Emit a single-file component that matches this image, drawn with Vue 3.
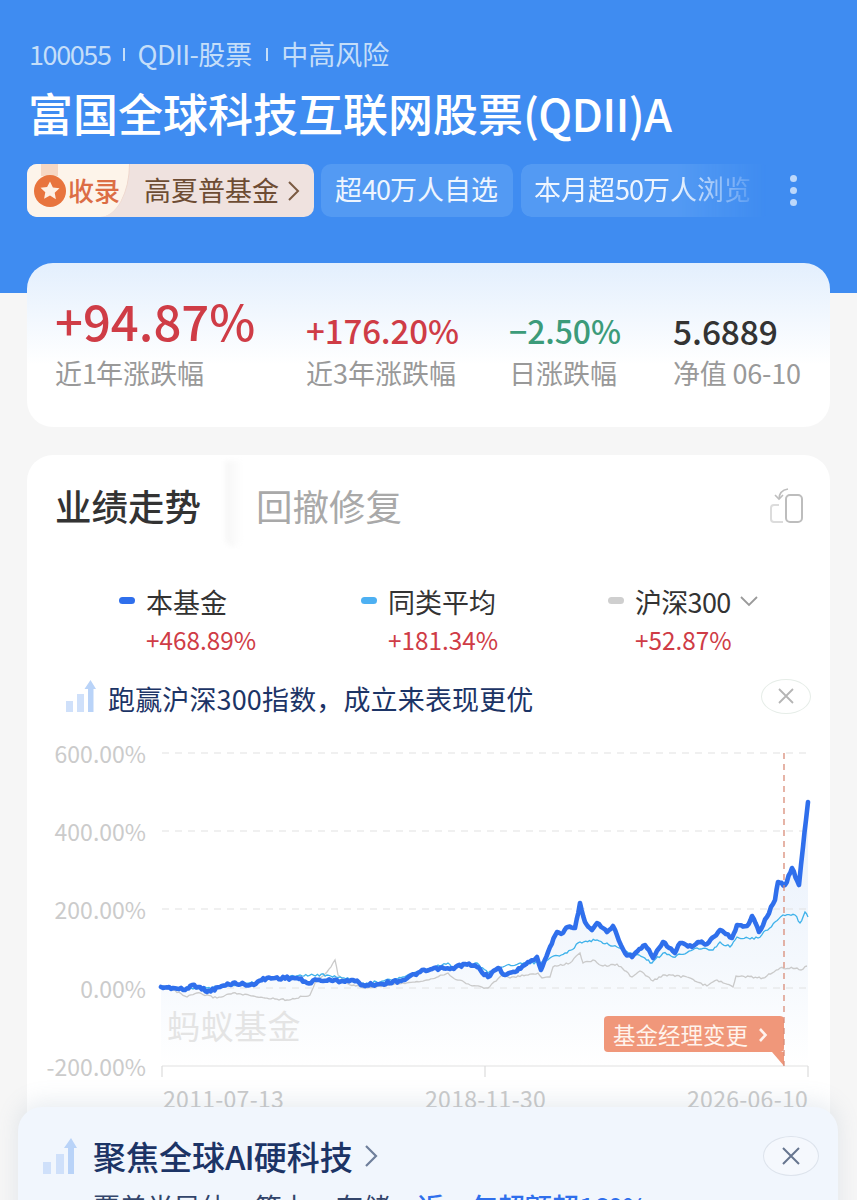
<script setup>
const main = [[161,987],[173,988],[185,990],[192,985],[200,987],[207,992],[220,987],[233,983],[250,985],[267,978],[297,978],[307,983],[317,980],[343,981],[353,980],[363,985],[380,984],[403,980],[420,972],[440,968],[450,969],[465,964],[477,967],[488,977],[498,968],[505,975],[515,972],[528,962],[537,957],[541,970],[550,947],[557,932],[563,933],[568,927],[575,928],[580,903],[585,922],[592,930],[597,923],[607,932],[613,926],[625,953],[632,957],[645,945],[653,958],[663,942],[675,953],[680,943],[692,947],[698,942],[707,944],[720,930],[732,938],[737,925],[747,926],[752,916],[759,932],[775,900],[778,882],[785,885],[792,868],[799,885],[803,847],[806,820],[808,802]]
const peer = [[161,987],[207,988],[250,983],[267,979],[300,975],[327,975],[340,977],[363,983],[380,982],[403,977],[420,972],[448,963],[452,968],[477,963],[488,973],[507,965],[528,963],[540,963],[550,958],[567,953],[580,942],[597,940],[617,947],[630,953],[643,957],[652,963],[663,953],[673,957],[697,948],[713,950],[720,942],[730,947],[737,937],[748,938],[758,938],[783,915],[795,915],[800,923],[805,912],[808,917]]
const gray = [[161,987],[173,990],[187,997],[197,993],[217,998],[233,993],[257,997],[287,1000],[310,995],[315,983],[327,972],[335,960],[338,975],[350,985],[367,988],[403,983],[427,980],[448,973],[452,977],[470,985],[488,988],[502,975],[510,978],[538,973],[542,978],[550,977],[553,967],[570,963],[580,953],[583,963],[593,960],[603,966],[617,964],[632,977],[640,971],[653,981],[663,975],[687,977],[707,986],[717,980],[733,987],[736,976],[763,978],[780,968],[797,968],[801,970],[807,966]]

function noise(i, seed) {
  const s = Math.sin(i * 12.9898 + seed * 78.233) * 43758.5453
  return s - Math.floor(s) - 0.5
}
function build(points, amp, seed) {
  const out = []
  let k = 0
  for (let i = 0; i < points.length - 1; i++) {
    const [x0, y0] = points[i]
    const [x1, y1] = points[i + 1]
    const steps = Math.max(1, Math.round((x1 - x0) / 2))
    for (let j = 0; j < steps; j++) {
      const t = j / steps
      const n = j === 0 ? 0 : noise(k, seed) * amp
      out.push([x0 + (x1 - x0) * t, y0 + (y1 - y0) * t + n])
      k++
    }
  }
  out.push(points[points.length - 1])
  return out.map(p => p[0].toFixed(1) + ',' + p[1].toFixed(1)).join(' ')
}
const mainLine = build(main, 3, 1)
const peerLine = build(peer, 2.6, 2)
const grayLine = build(gray, 1.8, 3)
const areaFill = '161,1066 ' + mainLine + ' 808,1066'

const stats = [
  { value: '+176.20%', label: '近3年涨跌幅', cls: 'up' },
  { value: '−2.50%', label: '日涨跌幅', cls: 'down' },
  { value: '5.6889', label: '净值 06-10', cls: 'flat' }
]
const legends = [
  { name: '本基金', value: '+468.89%', color: '#2f6fec', w: 242 },
  { name: '同类平均', value: '+181.34%', color: '#4db0f2', w: 247 },
  { name: '沪深300', value: '+52.87%', color: '#cfcfcf', w: 160, more: true }
]
const yLabels = [['600.00%', 763], ['400.00%', 841], ['200.00%', 919], ['0.00%', 998], ['-200.00%', 1076]]
const gridY = [753, 831, 909, 988]
const xLabels = [['2011-07-13', 163], ['2018-11-30', 425], ['2026-06-10', 687]]
</script>

<template>
  <div class="page">
    <header class="hero">
      <div class="meta">
        <span class="num">100055</span><i class="sep"></i>
        <span class="meta-type"><span class="qd">QDII-</span>股票</span><i class="sep"></i>
        <span>中高风险</span>
      </div>
      <h1 class="title">富国全球科技互联网股票<span class="latin">(QDII)A</span></h1>
      <div class="tags">
        <div class="award">
          <div class="award-left">
            <i class="ribbon"></i>
            <svg class="medal" width="32" height="32" viewBox="0 0 32 32">
              <circle cx="16" cy="16" r="16" fill="#e8743d" />
              <path d="M16 6.5l2.9 6 6.6.8-4.8 4.5 1.2 6.5L16 20.6l-5.9 3.2 1.2-6.5-4.8-4.5 6.6-.8z" fill="#fdf0e4" />
            </svg>
            <span class="award-name">收录</span>
          </div>
          <span class="award-text">高夏普基金</span>
          <svg class="award-arrow" width="13" height="22" viewBox="0 0 13 22"><path d="M2 2l9 9-9 9" fill="none" stroke="#7a5a42" stroke-width="2" /></svg>
        </div>
        <div class="tag tag-two">超<span class="num">40</span>万人自选</div>
        <div class="tag tag-fade">本月超<span class="num">50</span>万人浏览</div>
        <div class="dots"><i></i><i></i><i></i></div>
      </div>
    </header>

    <section class="card summary">
      <div class="stat-main">
        <div class="big">+94.87%</div>
        <div class="label">近<span class="num">1</span>年涨跌幅</div>
      </div>
      <div class="stat-rest">
        <div v-for="s in stats" :key="s.label" class="stat">
          <div class="mid" :class="s.cls">{{ s.value }}</div>
          <div class="label">{{ s.label }}</div>
        </div>
      </div>
    </section>

    <section class="card perf">
      <div class="tabs">
        <div class="tab-on">业绩走势</div>
        <div class="tab-shade"></div>
        <div class="tab-off">回撤修复</div>
        <svg class="share" width="36" height="38" viewBox="0 0 36 38" fill="none">
          <rect x="17" y="9" width="16" height="27" rx="4" stroke="#bdbdbd" stroke-width="2" />
          <path d="M10 19H5a3 3 0 0 0-3 3v11a3 3 0 0 0 3 3h9" stroke="#dcdcdc" stroke-width="2" />
          <path d="M10 13c0-5 3-9 9-10" stroke="#bdbdbd" stroke-width="1.6" />
          <path d="M6 9l4 4 4-4" stroke="#bdbdbd" stroke-width="1.6" />
        </svg>
      </div>

      <div class="legends">
        <div v-for="l in legends" :key="l.name" class="legend" :style="{ width: l.w + 'px' }">
          <div class="legend-top">
            <i class="swatch" :style="{ background: l.color }"></i>
            <span class="legend-name" :class="{ tight: l.more }">{{ l.name }}</span>
            <svg v-if="l.more" class="legend-more" width="20" height="12" viewBox="0 0 20 12"><path d="M2 2l8 8 8-8" fill="none" stroke="#9a9a9a" stroke-width="1.8" /></svg>
          </div>
          <div class="legend-val">{{ l.value }}</div>
        </div>
      </div>

      <div class="hint">
        <svg class="bars" width="30" height="32" viewBox="0 0 30 32">
          <rect x="0" y="21" width="7" height="11" fill="#cfe0fa" />
          <rect x="11" y="14" width="7" height="18" fill="#cfe0fa" />
          <path d="M22 32V9h-3.500L24.500 0 30 9h-2.500v23z" fill="#b9d3f8" />
        </svg>
        <span class="hint-text">跑赢沪深300指数，成立来表现更优</span>
        <div class="pill">
          <svg width="18" height="18" viewBox="0 0 18 18"><path d="M2 2l14 14M16 2L2 16" stroke="#b5b5b5" stroke-width="1.8" /></svg>
        </div>
      </div>

      <svg class="chart" width="803" height="380" viewBox="27 740 803 380">
        <defs>
          <linearGradient id="area" x1="0" y1="0" x2="0" y2="1">
            <stop offset="0" stop-color="#e9f1fc" />
            <stop offset="0.6" stop-color="#f4f8fd" />
            <stop offset="1" stop-color="#ffffff" />
          </linearGradient>
        </defs>
        <polygon :points="areaFill" fill="url(#area)" />
        <line v-for="y in gridY" :key="y" x1="162" x2="808" :y1="y" :y2="y" stroke="#e2e2e2" stroke-width="1.2" stroke-dasharray="7 6" />
        <line x1="162" x2="808" y1="1066" y2="1066" stroke="#e2e2e2" stroke-width="1.2" />
        <line x1="162" x2="162" y1="1066" y2="1077" stroke="#dcdcdc" stroke-width="1.2" />
        <line x1="485" x2="485" y1="1066" y2="1077" stroke="#dcdcdc" stroke-width="1.2" />
        <line x1="808" x2="808" y1="1066" y2="1077" stroke="#dcdcdc" stroke-width="1.2" />
        <text v-for="t in yLabels" :key="t[0]" class="axis" x="146" :y="t[1]" text-anchor="end">{{ t[0] }}</text>
        <text v-for="t in xLabels" :key="t[0]" class="axis axis-x" :x="t[1]" y="1108">{{ t[0] }}</text>
        <text class="mark" x="167" y="1039">蚂蚁基金</text>
        <polyline :points="grayLine" fill="none" stroke="#cacaca" stroke-width="1.3" />
        <polyline :points="peerLine" fill="none" stroke="#3fb2ea" stroke-width="1.3" />
        <polyline :points="mainLine" fill="none" stroke="#2f6fec" stroke-width="4.6" stroke-linejoin="round" stroke-linecap="round" />
        <rect x="604" y="1016" width="180" height="36" rx="4" fill="#f0977a" />
        <path d="M772 1052h12v14z" fill="#f0977a" />
        <line x1="784" x2="784" y1="753" y2="1066" stroke="#d98c78" stroke-width="1.3" stroke-dasharray="6 5" />
        <text class="tag-text" x="613" y="1044">基金经理变更</text>
        <path d="M760 1029l5.500 6-5.500 6" fill="none" stroke="#fff3ee" stroke-width="2.600" />
      </svg>
    </section>

    <aside class="float">
      <div class="float-head">
        <svg class="bars" width="34" height="36" viewBox="0 0 34 36">
          <rect x="0" y="24" width="8" height="12" fill="#cfe0fa" />
          <rect x="13" y="16" width="8" height="20" fill="#cfe0fa" />
          <path d="M25 36V10h-4l7-10 6 10h-3v26z" fill="#b9d3f8" />
        </svg>
        <span class="float-title">聚焦全球<span class="ai">AI</span>硬科技</span>
        <svg class="float-arrow" width="15" height="24" viewBox="0 0 15 24"><path d="M2 2l10 10L2 22" fill="none" stroke="#6f7f9b" stroke-width="2.200" /></svg>
        <div class="pill pill-lg">
          <svg width="20" height="20" viewBox="0 0 20 20"><path d="M2 2l16 16M18 2L2 18" stroke="#66758f" stroke-width="2" /></svg>
        </div>
      </div>
      <div class="float-body">覆盖半导体、算力、存储，<span class="blue">近一年超额超<span class="num">160%</span></span></div>
    </aside>
  </div>
</template>

<style>
html, body { margin: 0; background: #f6f6f6; }
</style>

<style scoped>
.page {
  position: relative;
  width: 857px;
  height: 1200px;
  overflow: hidden;
  background: #f6f6f6;
  font-family: "Noto Sans CJK SC", "Noto Sans", sans-serif;
}
.num { letter-spacing: -1px; }

.hero {
  height: 293px;
  box-sizing: border-box;
  padding: 35px 0 0 27px;
  background: #3f8cf1;
  color: #fff;
}
.meta {
  display: flex;
  align-items: center;
  height: 38px;
  padding-left: 2px;
  font-size: 27px;
  line-height: 38px;
  color: #c4def9;
}
.meta .num { letter-spacing: -1.400px; }
.qd { letter-spacing: -.6px; }
.meta-type { margin-right: 2px; }
.sep {
  width: 2px;
  height: 13px;
  margin: 0 13px 0 12px;
  background: #c4def9;
}
.title {
  margin: 11px 0 0 1px;
  height: 58px;
  font-size: 45px;
  line-height: 58px;
  font-weight: 500;
  white-space: nowrap;
}
.latin { letter-spacing: -.7px; }
.tags {
  display: flex;
  align-items: center;
  gap: 8px;
  margin-top: 22px;
  height: 53px;
}
.award {
  display: flex;
  align-items: center;
  width: 287px;
  height: 53px;
  margin-right: -1px;
  overflow: hidden;
  border-radius: 10px;
  background: #efe2df;
}
.award-left {
  position: relative;
  display: flex;
  align-items: center;
  width: 103px;
  height: 100%;
  padding-left: 7px;
  box-sizing: border-box;
  background: #fdf4ea;
  border-bottom-right-radius: 30px 53px;
  border-right: 1px solid #eed6cc;
}
.ribbon {
  position: absolute;
  left: 14px;
  top: 0;
  width: 17px;
  height: 12px;
  background: #f6d8c4;
}
.medal { position: relative; flex: none; }
.award-name {
  margin-left: 2px;
  padding-bottom: 3px;
  font-size: 26px;
  font-weight: 500;
  color: #dc6d45;
  white-space: nowrap;
}
.award-text {
  margin-left: 14px;
  padding-bottom: 3px;
  font-size: 27px;
  color: #6d4c33;
  white-space: nowrap;
}
.award-arrow { margin-left: 8px; }
.tag {
  flex: none;
  box-sizing: border-box;
  height: 53px;
  padding: 0 13px;
  border-radius: 10px;
  background: #539af3;
  font-size: 27px;
  line-height: 50px;
  color: #eef5fe;
  white-space: nowrap;
}
.tag-two { width: 192px; padding-left: 14px; }
.tag-fade {
  width: 250px;
  overflow: hidden;
  -webkit-mask-image: linear-gradient(90deg, #000 62%, transparent 98%);
  mask-image: linear-gradient(90deg, #000 62%, transparent 98%);
}
.dots {
  display: flex;
  flex-direction: column;
  gap: 5px;
  margin-left: 11px;
}
.dots i {
  width: 7px;
  height: 7px;
  border-radius: 50%;
  background: #bcd8fb;
}

.card {
  margin: 0 27px;
  border-radius: 26px;
  background: #fff;
}
.summary {
  display: flex;
  align-items: flex-start;
  height: 164px;
  margin-top: -30px;
  box-sizing: border-box;
  padding: 23px 0 0 28px;
  position: relative;
  background: linear-gradient(180deg, #e3effd 0%, #ffffff 62%);
}
.big {
  height: 68px;
  font-size: 49px;
  line-height: 68px;
  font-weight: 500;
  color: #cf3c46;
  white-space: nowrap;
}
.label {
  height: 38px;
  font-size: 27px;
  line-height: 38px;
  color: #999;
  white-space: nowrap;
}
.stat-main { width: 251px; }
.stat-rest {
  display: flex;
  padding-top: 21px;
}
.stat:nth-child(1) { width: 203px; }
.stat:nth-child(2) { width: 164px; }
.stat:nth-child(3) .label { letter-spacing: -.2px; }
.mid {
  height: 47px;
  font-size: 33px;
  line-height: 47px;
  letter-spacing: -.1px;
  font-weight: 500;
  white-space: nowrap;
}
.up { color: #cf3c46; }
.down { color: #3c9b7a; font-size: 32px; }
.flat { color: #333; font-size: 33.500px; }

.perf {
  margin-top: 28px;
  height: 720px;
}
.tabs {
  position: relative;
  display: flex;
  align-items: center;
  height: 100px;
  padding: 0 25px 0 28px;
}
.tab-on {
  font-size: 36.500px;
  font-weight: 500;
  color: #333;
  white-space: nowrap;
}
.tab-shade {
  position: absolute;
  left: 198px;
  top: 6px;
  width: 18px;
  height: 86px;
  border-radius: 0 0 10px 10px;
  background: linear-gradient(90deg, #f6f6f6, #ffffff);
  filter: blur(2px);
}
.tab-off {
  margin-left: 55px;
  font-size: 36.500px;
  color: #a9a9a9;
  white-space: nowrap;
}
.share { margin-left: auto; }

.legends {
  display: flex;
  margin-top: 25px;
  padding-left: 92px;
}
.legend-top {
  position: relative;
  display: flex;
  align-items: center;
  height: 42px;
  padding-left: 27px;
}
.swatch {
  position: absolute;
  left: 0;
  top: 17px;
  width: 16px;
  height: 7px;
  border-radius: 4px;
}
.legend-name {
  font-size: 27px;
  color: #333;
  white-space: nowrap;
}
.tight { letter-spacing: -.7px; }
.legend-more { margin-left: 9px; }
.legend-val {
  height: 36px;
  padding-left: 27px;
  font-size: 24.300px;
  line-height: 36px;
  color: #cf3c46;
  white-space: nowrap;
}
.hint {
  display: flex;
  align-items: center;
  height: 38px;
  margin-top: 19px;
  padding: 0 19px 0 39px;
}
.hint-text {
  margin-left: 12px;
  padding-top: 4px;
  font-size: 27px;
  letter-spacing: .15px;
  color: #1c3466;
  white-space: nowrap;
}
.pill {
  display: flex;
  align-items: center;
  justify-content: center;
  margin-left: auto;
  width: 50px;
  height: 35px;
  box-sizing: border-box;
  border: 1px solid #e6ede8;
  border-radius: 50%;
  background: #fff;
}
.chart {
  display: block;
  margin-top: 25px;
}
.axis {
  font-size: 23px;
  fill: #cbcbcb;
  font-family: "Noto Sans CJK SC", "Noto Sans", sans-serif;
}
.axis-x { letter-spacing: .3px; }
.mark {
  font-size: 33px;
  letter-spacing: .5px;
  fill: #e4e4e4;
}
.tag-text {
  font-size: 22.500px;
  fill: #fff3ec;
}

.float {
  position: absolute;
  left: 18px;
  top: 1107px;
  width: 820px;
  height: 140px;
  box-sizing: border-box;
  padding: 28px 19px 0 25px;
  border-radius: 24px;
  background: #f1f6fd;
  box-shadow: 0 -6px 22px rgba(120, 140, 170, .16);
}
.float-head {
  display: flex;
  align-items: center;
  height: 41px;
}
.float-title {
  margin-left: 16px;
  font-size: 33px;
  font-weight: 500;
  color: #1c3466;
  white-space: nowrap;
}
.ai { letter-spacing: -1px; }
.float-arrow { margin-left: 11px; }
.pill-lg {
  width: 56px;
  height: 40px;
  border-color: #dde3ec;
  background: #f5f8fd;
}
.float-body {
  margin: 11px 0 0 50px;
  font-size: 27px;
  line-height: 40px;
  color: #33456b;
  white-space: nowrap;
}
.blue { color: #2f6fec; font-weight: 500; }
</style>
